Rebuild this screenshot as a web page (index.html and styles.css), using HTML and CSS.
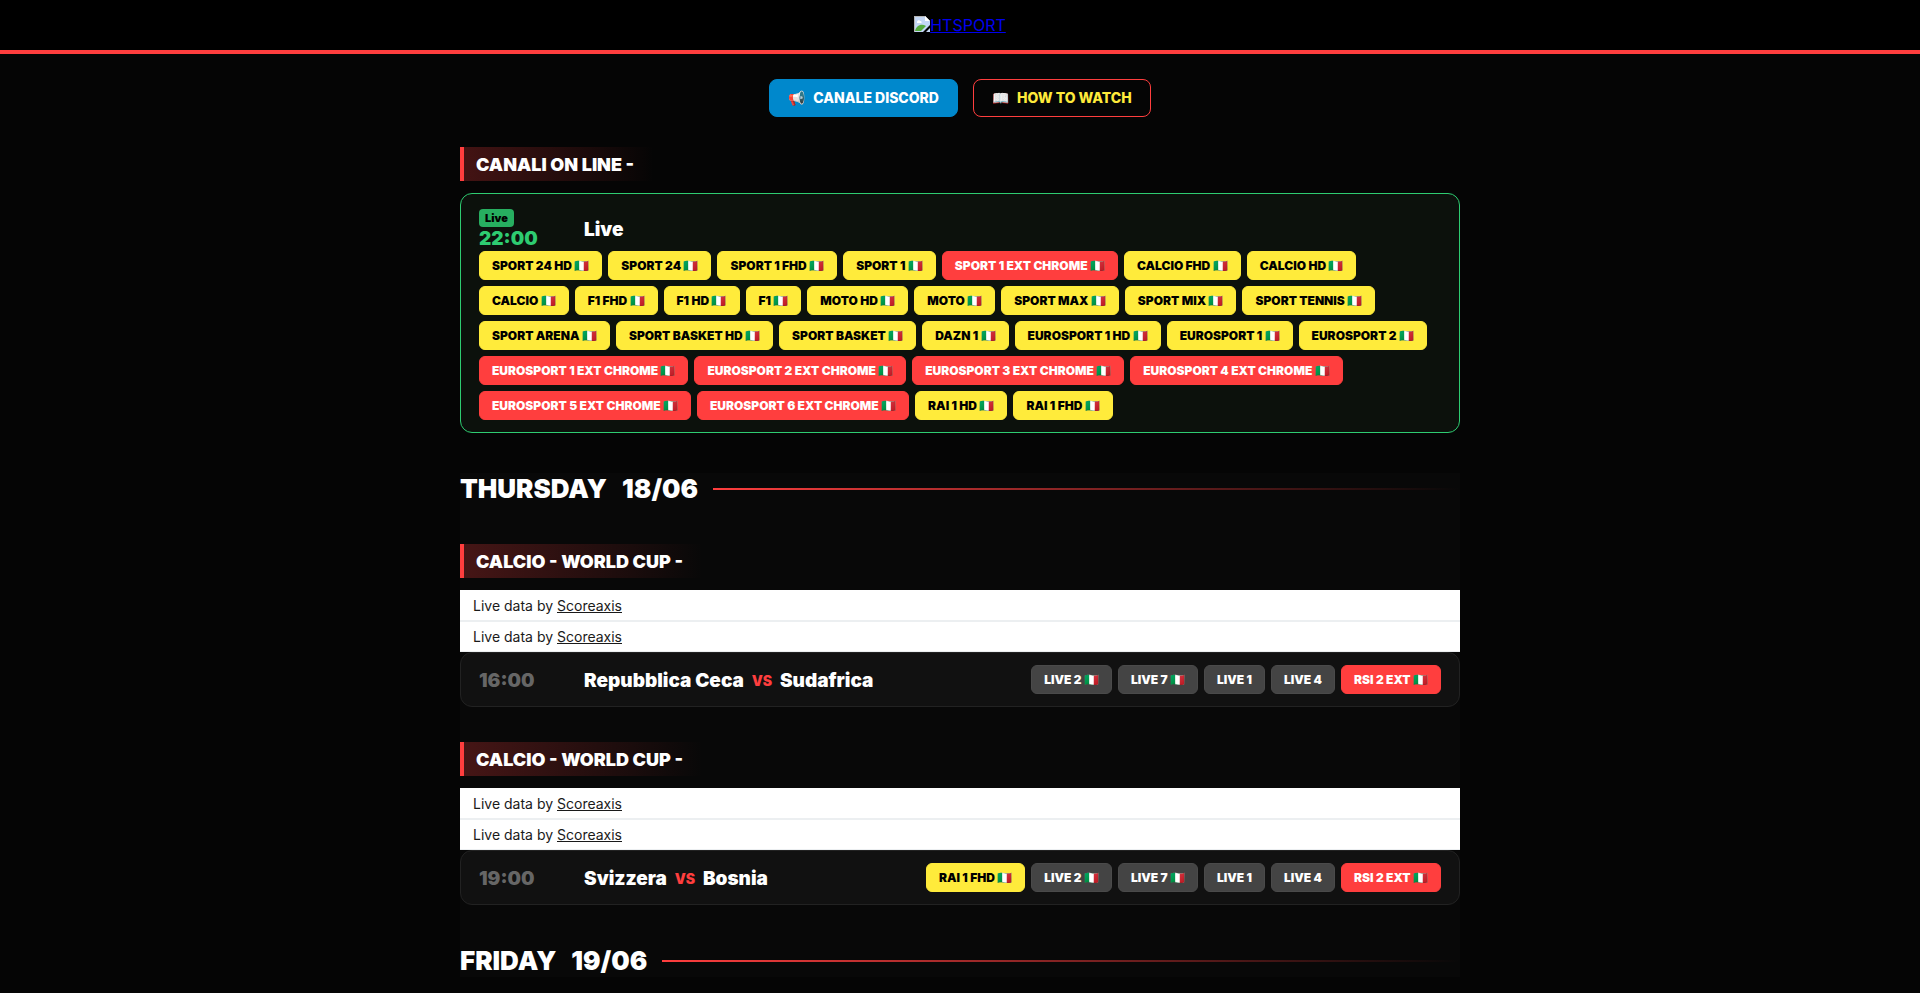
FILE: index.html
```html
<!DOCTYPE html>
<html lang="it">
<head>
	<meta charset="utf-8">
	<meta name="viewport" content="width=device-width, initial-scale=1">
	<title>HTSPORT</title>
	<link rel="stylesheet" href="styles.css">
</head>
<body>
<header>
	<a href="#" class="logo"><svg width="16" height="16" viewBox="0 0 16 16"><path d="M0 0h11l5 5v4l-7 7H0z" fill="#c3d6f5"/><path d="M0 16V0h11l5 5h-1l-4-4H1v15z" fill="#b5b5b5"/><path d="M11 0v5h5z" fill="#fff"/><path d="M3 6c0-2 3-2 3-1 2 0 2 2 1 2H3z" fill="#fff"/><path d="M1 15c1-5 6-8 11-5l-5 5z" fill="#55ab3d"/><path d="M12 16l4-4v4z" fill="#c3d6f5"/></svg>HTSPORT</a>
</header>
<nav>
	<a href="#" class="nav_btn discord"><span>📢</span>CANALE DISCORD</a>
	<a href="#" class="nav_btn howto"><span>📖</span>HOW TO WATCH</a>
</nav>
<main>
	<h3>CANALI ON LINE -</h3>
	<div class="event on_air">
		<div class="time"><span class="badge">Live</span>22:00</div>
		<div class="teams">Live</div>
		<div class="links">
			<a href="#" class="btn yellow">SPORT 24 HD 🇮🇹</a>
			<a href="#" class="btn yellow">SPORT 24 🇮🇹</a>
			<a href="#" class="btn yellow">SPORT 1 FHD 🇮🇹</a>
			<a href="#" class="btn yellow">SPORT 1 🇮🇹</a>
			<a href="#" class="btn red">SPORT 1 EXT CHROME 🇮🇹</a>
			<a href="#" class="btn yellow">CALCIO FHD 🇮🇹</a>
			<a href="#" class="btn yellow">CALCIO HD 🇮🇹</a>
			<a href="#" class="btn yellow">CALCIO 🇮🇹</a>
			<a href="#" class="btn yellow">F1 FHD 🇮🇹</a>
			<a href="#" class="btn yellow">F1 HD 🇮🇹</a>
			<a href="#" class="btn yellow">F1 🇮🇹</a>
			<a href="#" class="btn yellow">MOTO HD 🇮🇹</a>
			<a href="#" class="btn yellow">MOTO 🇮🇹</a>
			<a href="#" class="btn yellow">SPORT MAX 🇮🇹</a>
			<a href="#" class="btn yellow">SPORT MIX 🇮🇹</a>
			<a href="#" class="btn yellow">SPORT TENNIS 🇮🇹</a>
			<a href="#" class="btn yellow">SPORT ARENA 🇮🇹</a>
			<a href="#" class="btn yellow">SPORT BASKET HD 🇮🇹</a>
			<a href="#" class="btn yellow">SPORT BASKET 🇮🇹</a>
			<a href="#" class="btn yellow">DAZN 1 🇮🇹</a>
			<a href="#" class="btn yellow">EUROSPORT 1 HD 🇮🇹</a>
			<a href="#" class="btn yellow">EUROSPORT 1 🇮🇹</a>
			<a href="#" class="btn yellow">EUROSPORT 2 🇮🇹</a>
			<a href="#" class="btn red">EUROSPORT 1 EXT CHROME 🇮🇹</a>
			<a href="#" class="btn red">EUROSPORT 2 EXT CHROME 🇮🇹</a>
			<a href="#" class="btn red">EUROSPORT 3 EXT CHROME 🇮🇹</a>
			<a href="#" class="btn red">EUROSPORT 4 EXT CHROME 🇮🇹</a>
			<a href="#" class="btn red">EUROSPORT 5 EXT CHROME 🇮🇹</a>
			<a href="#" class="btn red">EUROSPORT 6 EXT CHROME 🇮🇹</a>
			<a href="#" class="btn yellow">RAI 1 HD 🇮🇹</a>
			<a href="#" class="btn yellow">RAI 1 FHD 🇮🇹</a>
		</div>
	</div>

	<div class="schedule">
		<h2><span>THURSDAY</span><span>18/06</span></h2>

		<h3>CALCIO - WORLD CUP -</h3>
		<div class="widget">Live data by <a href="#">Scoreaxis</a></div>
		<div class="widget">Live data by <a href="#">Scoreaxis</a></div>
		<div class="event">
			<div class="time">16:00</div>
			<div class="teams">Repubblica Ceca <span class="vs">VS</span> Sudafrica</div>
			<div class="links">
				<a href="#" class="btn">LIVE 2 🇮🇹</a>
				<a href="#" class="btn">LIVE 7 🇮🇹</a>
				<a href="#" class="btn">LIVE 1</a>
				<a href="#" class="btn">LIVE 4</a>
				<a href="#" class="btn red">RSI 2 EXT 🇮🇹</a>
			</div>
		</div>

		<h3>CALCIO - WORLD CUP -</h3>
		<div class="widget">Live data by <a href="#">Scoreaxis</a></div>
		<div class="widget">Live data by <a href="#">Scoreaxis</a></div>
		<div class="event">
			<div class="time">19:00</div>
			<div class="teams">Svizzera <span class="vs">VS</span> Bosnia</div>
			<div class="links">
				<a href="#" class="btn yellow">RAI 1 FHD 🇮🇹</a>
				<a href="#" class="btn">LIVE 2 🇮🇹</a>
				<a href="#" class="btn">LIVE 7 🇮🇹</a>
				<a href="#" class="btn">LIVE 1</a>
				<a href="#" class="btn">LIVE 4</a>
				<a href="#" class="btn red">RSI 2 EXT 🇮🇹</a>
			</div>
		</div>

		<h2><span>FRIDAY</span><span>19/06</span></h2>
	</div>
</main>
</body>
</html>
```
FILE: styles.css
```css
* {
	box-sizing: border-box;
}
body {
	margin: 0;
	background: #050505;
	color: #fff;
	font-family: Inter, sans-serif;
}
header {
	height: 54px;
	display: flex;
	align-items: center;
	justify-content: center;
	background: #000;
	border-bottom: 4px solid #ff3e3e;
}
.logo {
	color: #0000ee;
	font-size: 16px;
	line-height: 20px;
}
.logo svg {
	vertical-align: -1px;
}
nav {
	display: flex;
	flex-wrap: wrap;
	justify-content: center;
	gap: 15px;
	padding-top: 25px;
}
.nav_btn {
	display: flex;
	align-items: center;
	gap: 8px;
	height: 38px;
	padding: 0 18px 1px;
	border: 1px solid #0088cc;
	border-radius: 8px;
	font-size: 14px;
	line-height: 17px;
	font-weight: 800;
	text-decoration: none;
}
.discord {
	background: #0088cc;
	color: #fff;
}
.howto {
	border-color: #ff3e3e;
	color: #ffeb3b;
}
main {
	max-width: 1000px;
	margin: 0 auto;
	padding-top: 30px;
}
h3 {
	width: fit-content;
	height: 34px;
	margin: 0 0 12px;
	padding: 0 20px 0 12px;
	border-left: 4px solid #ff3e3e;
	background: linear-gradient(90deg, rgba(255, 62, 62, 0.25), transparent);
	font-size: 18px;
	line-height: 35px;
	font-weight: 900;
}
.event {
	display: grid;
	grid-template-columns: 90px 1fr auto;
	column-gap: 15px;
	align-items: center;
	margin-bottom: 35px;
	padding: 12px 18px;
	background: #111;
	border: 1px solid #222;
	border-radius: 12px;
}
.on_air {
	margin-bottom: 40px;
	background: #0c110c;
	border-color: #2ecc71;
}
.on_air .links {
	grid-column: 1 / -1;
	justify-content: flex-start;
}
.time,
.teams {
	padding-top: 2px;
	font-size: 19px;
	line-height: 24px;
	font-weight: 900;
}
.time {
	color: #666;
}
.on_air .time {
	padding-top: 3px;
	color: #2ecc71;
}
.badge {
	display: block;
	width: fit-content;
	padding: 0 6px;
	background: #27ae60;
	border-radius: 4px;
	color: #000;
	font-size: 11px;
	line-height: 18px;
}
.vs {
	margin: 0 4px;
	color: #ff3e3e;
	font-size: 14px;
	vertical-align: 1px;
}
.links {
	display: flex;
	flex-wrap: wrap;
	justify-content: flex-end;
	gap: 6px;
}
.btn {
	padding: 6px 12px;
	background: #444;
	border: 1px solid #4a4a4a;
	border-radius: 6px;
	color: #fff;
	font-size: 12px;
	line-height: 15px;
	font-weight: 900;
	text-decoration: none;
}
.yellow {
	background: #ffeb3b;
	border-color: #ffeb3b;
	color: #000;
}
.red {
	background: #ff3e3e;
	border-color: #ff3e3e;
}
.schedule {
	background: #080808;
}
h2 {
	display: flex;
	align-items: center;
	gap: 15px;
	margin: 0 0 39px;
	font-size: 26px;
	line-height: 32px;
	font-weight: 900;
}
.event + h2 {
	margin: 40px 0 0;
}
h2::after {
	content: "";
	flex: 1;
	height: 2px;
	background: linear-gradient(90deg, #ff3e3e, transparent);
}
.widget {
	height: 31px;
	padding: 0 13px;
	background: #fff;
	border-bottom: 1px solid #eceff1;
	color: #1a1a1a;
	font-size: 14px;
	line-height: 31px;
}
.widget + .widget {
	border-top: 1px solid #eceff1;
	line-height: 29px;
}
.widget a {
	color: #1a1a1a;
}
```
